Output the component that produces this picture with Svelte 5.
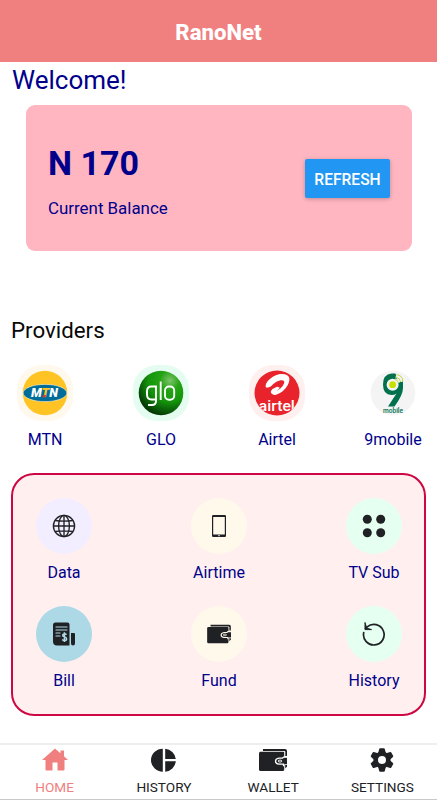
<script>
  const providers = [
    { id: 'mtn', label: 'MTN', bg: '#fff8ec' },
    { id: 'glo', label: 'GLO', bg: '#e5fdf0' },
    { id: 'airtel', label: 'Airtel', bg: '#fff0f0' },
    { id: 'nine', label: '9mobile', bg: '#ffffff' }
  ];
  const services = [
    [
      { id: 'globe', label: 'Data', bg: '#f2eeff' },
      { id: 'phone', label: 'Airtime', bg: '#fff9eb' },
      { id: 'dots', label: 'TV Sub', bg: '#e5fff1' }
    ],
    [
      { id: 'bill', label: 'Bill', bg: '#add8e6' },
      { id: 'wallet', label: 'Fund', bg: '#fff9eb' },
      { id: 'history', label: 'History', bg: '#e5fff1' }
    ]
  ];
  const tabs = [
    { id: 'home', label: 'HOME' },
    { id: 'pie', label: 'HISTORY' },
    { id: 'wallet', label: 'WALLET' },
    { id: 'gear', label: 'SETTINGS' }
  ];
</script>

{#snippet wallet(paper)}
  <path fill="currentColor" d="M4 2h22q2 0 2 2v5h-1.700V5q0-1-1-1H4z" />
  <path fill="currentColor" d="M1.500 4.700h22.700q1 0 1 1V22.500q0 1.500-1.500 1.500h-22Q0 24 0 22.500V6.200q0-1.500 1.500-1.500z" />
  <path fill="currentColor" d="M26.200 18H28v1.500l-1.800 2z" />
  <path fill="currentColor" d="M20 11.200h4l1-1h3.500v7H20q-3.500 0-3.500-3t3.500-3z" />
  <path fill="none" stroke={paper} stroke-width="1.300" d="M28 10.200h-3.500l-1 1H20q-3.500.5-3.500 3t3.500 3h4.500v2" />
  <rect x="19.300" y="13.200" width="3.400" height="1.800" rx=".9" fill="none" stroke={paper} stroke-width="1" />
{/snippet}

<div class="app">
  <header>RanoNet</header>
  <main>
    <h1>Welcome!</h1>
    <section class="card">
      <div>
        <div class="amount">N 170</div>
        <div class="caption">Current Balance</div>
      </div>
      <button>REFRESH</button>
    </section>
    <h2>Providers</h2>
    <section class="providers">
      {#each providers as p}
        <div class="item provider">
          <div class="logo" style:background={p.bg}>
            <svg width="46" height="46" viewBox="0 0 46 46">
              <defs>
                <radialGradient id="green" cx=".7" cy=".22" r=".8">
                  <stop offset="0" stop-color="#7cc36a" />
                  <stop offset=".28" stop-color="#24a313" />
                  <stop offset=".6" stop-color="#14950c" />
                  <stop offset="1" stop-color="#043b05" />
                </radialGradient>
                <clipPath id="round"><circle cx="23" cy="23" r="22.500" /></clipPath>
              </defs>
              {#if p.id === 'mtn'}
                <circle cx="23" cy="23" r="22.300" fill="#ffc423" />
                <ellipse cx="23" cy="23" rx="21.800" ry="8.600" fill="#006c98" stroke="#fff" stroke-width=".5" />
                <text x="9" y="27.300" class="mtn" textLength="27" lengthAdjust="spacingAndGlyphs">M<tspan fill="#ffc423">T</tspan>N</text>
                <path d="M21.200 25h2.900l-.6 2.400h-2.800z" fill="#e23b34" />
              {:else if p.id === 'glo'}
                <circle cx="23" cy="23" r="22.300" fill="url(#green)" />
                <g fill="none" stroke="#fff" stroke-width="1.900">
                  <path d="M18 29.500h-4.500q-4.500 0-4.500-5v-3q0-5 4.500-5H18V31q0 4-4 4h-4M22.700 11.500V30" />
                  <rect x="27" y="16.500" width="9.200" height="13.200" rx="4" />
                </g>
              {:else if p.id === 'airtel'}
                <circle cx="23" cy="23" r="22.500" fill="#e9232b" />
                <path fill="#fff" d="M12 17.500C10 12 20 4 28 4c8 0 9 5 5.500 11.500C31 20 27 23 22 24.700c-3.500 1-5-1.200-2-2.400 5-2 8.500-5 10-8.800 1.500-4-3-4.200-8-1.500-4 2.500-5 6-10 5.500z" />
                <path fill="#fff" d="m18.500 19 4.500-2.300q3 0 2.500 1.600-3 4-7 5.700-3.500-1.500 0-5z" />
                <g clip-path="url(#round)"><text x="4.800" y="41.300" class="airtel" textLength="36" lengthAdjust="spacingAndGlyphs">airtel</text></g>
              {:else}
                <circle cx="23" cy="23" r="22.300" fill="#f4f4f4" />
                <path fill="#00704d" d="M25.500 3.600h-4Q13 4.500 13 14.500 13 25 21.500 25q3 0 5-1.500L18 36.500h6.500Q33 25 33 18v-6.500l-5 1z" />
                <circle cx="22.600" cy="14.700" r="6" fill="#f4f4f4" />
                <circle cx="22.600" cy="14.700" r="3.400" fill="#c6e000" />
                <path d="M25 9.500q3 .8 3.500 3.500M25.700 7q4.500 1 5 5M26.500 4.500q6 1 6.300 6.500" fill="none" stroke="#f4f4f4" stroke-width="2" />
                <path d="M25 9.500q3 .8 3.500 3.500M25.700 7q4.500 1 5 5M26.500 4.500q6 1 6.300 6.500" fill="none" stroke="#bfd83b" />
                <text x="13" y="42.500" class="nine" textLength="20" lengthAdjust="spacingAndGlyphs">mobile</text>
              {/if}
            </svg>
          </div>
          <span>{p.label}</span>
        </div>
      {/each}
    </section>
    <section class="services">
      {#each services as row}
        <div class="row">
          {#each row as s}
            <div class="item">
              <div class="circle" style:background={s.bg}>
                {#if s.id === 'globe'}
                  <svg width="24" height="24" viewBox="0 0 24 24" fill="none" stroke="currentColor" stroke-width="1.350">
                    <circle cx="12" cy="12" r="10.600" /><ellipse cx="12" cy="12" rx="5.400" ry="10.600" />
                    <path d="M12 1.300v21.400M1.300 12h21.400M3.200 6.500q8.800 1.200 17.600 0M3.200 17.500q8.800-1.200 17.600 0" />
                  </svg>
                {:else if s.id === 'phone'}
                  <svg width="24" height="24" viewBox="0 0 24 24">
                    <path fill="currentColor" fill-rule="evenodd" d="M6.200 1h11.600q1.200 0 1.200 1.200v19.600q0 1.200-1.200 1.200H6.200Q5 23 5 21.800V2.200Q5 1 6.200 1zM6.200 2.900v17.600h11.600V2.900z" />
                    <path d="M11.300 21.700h1.500" stroke="#fff" />
                  </svg>
                {:else if s.id === 'dots'}
                  <svg width="24" height="24" viewBox="0 0 24 24" fill="currentColor">
                    <circle cx="5.300" cy="5.300" r="4.500" /><circle cx="18.700" cy="5.300" r="4.500" /><circle cx="5.300" cy="18.700" r="4.500" /><circle cx="18.700" cy="18.700" r="4.500" />
                  </svg>
                {:else if s.id === 'bill'}
                  <svg width="24" height="24" viewBox="0 0 24 24">
                    <path fill="currentColor" d="M3.500.5h12q2 0 2 2v21H5q-4 0-4-4V3Q1 .5 3.500.5zM19 11h3q1 0 1 1v9.500q0 2-2 2t-2-2z" />
                    <path d="M4 5h11M4 8h11M4 11h4M4 14h4" stroke="#add8e6" stroke-width="1.200" stroke-linecap="round" />
                    <path d="M14.500 12.800q-1-1.300-2.600-.9-1.700.6-.9 2.300l3 1.500q1.500 1.800-.5 2.900-2 .5-3.300-1M12.400 10.300V20" fill="none" stroke="#add8e6" stroke-width="1.500" />
                  </svg>
                {:else if s.id === 'wallet'}
                  <svg width="24" height="22" viewBox="0 0 28 26">{@render wallet('#fff9eb')}</svg>
                {:else}
                  <svg width="24" height="24" viewBox="0 0 24 24" fill="none" stroke="currentColor" stroke-width="1.700" stroke-linecap="round">
                    <path d="M1.700 10.700A10.300 10.300 0 1 0 5.200 4.800L3.500 6.500" />
                    <path fill="currentColor" stroke-width="1" stroke-linejoin="round" d="M3 .9v6.700h6.500L5 6.200z" />
                  </svg>
                {/if}
              </div>
              <span>{s.label}</span>
            </div>
          {/each}
        </div>
      {/each}
    </section>
  </main>
  <nav>
    {#each tabs as t}
      <div class="tab" class:active={t.id === 'home'}>
        <svg width="28" height="26" viewBox="0 0 28 26">
          {#if t.id === 'home'}
            <path fill="currentColor" d="M14 1.500 1 13h3.500v9.500q0 1 1 1h6v-8h5v8h6q1 0 1-1V13H27l-4-3.700V3.500h-3.500v2.800z" />
          {:else if t.id === 'pie'}
            <path fill="currentColor" d="M12.800 1.700a11.800 11.500 0 0 0 0 23zM15.200 1.700v10.200h10.600A11.500 11.500 0 0 0 15.200 1.700zM15.200 14.300v10.400a11.500 11.500 0 0 0 10.600-10.400z" />
          {:else if t.id === 'wallet'}
            {@render wallet('#fff')}
          {:else}
            <g fill="currentColor" transform="translate(14 13)">
              <path fill-rule="evenodd" d="M8.500 0A8.500 8.500 0 1 1-8.500 0 8.500 8.500 0 1 1 8.500 0zM4 0A4 4 0 1 0-4 0 4 4 0 1 0 4 0z" />
              {#each [0, 60, 120, 180, 240, 300] as a}
                <path transform="rotate({a})" d="m-3.800-7 1-4q.2-.8 1-.8h3.600q.8 0 1 .8l1 4z" />
              {/each}
            </g>
          {/if}
        </svg>
        <span>{t.label}</span>
      </div>
    {/each}
  </nav>
</div>

<style>
  :global(body) { background: #fff; }
  .app { width: 437px; height: 800px; display: flex; flex-direction: column; overflow: hidden; font-family: Roboto, sans-serif; color: #00008b; }
  header { height: 62px; box-sizing: border-box; padding-top: 2px; background: #f08080; color: #fff; font-size: 22.200px; font-weight: 800; display: flex; align-items: center; justify-content: center; flex: none; }
  main { flex: 1; padding: 0 11px; }
  h1 { margin: 0; padding-left: 1px; height: 42.500px; line-height: 36px; font-size: 26px; font-weight: 400; box-sizing: border-box; }
  .card { height: 146px; margin: .5px 14px 0 15px; padding: 0 22px; box-sizing: border-box; border-radius: 9px; background: #ffb6c1; display: flex; justify-content: space-between; align-items: center; }
  .amount { font-size: 34px; font-weight: 700; line-height: 40px; padding-top: 5px; }
  .caption { font-size: 16.900px; line-height: 20px; margin-top: 15px; }
  button { width: 85px; height: 39px; padding: 3px 0 0; border: 0; border-radius: 2px; background: #2196f3; color: #fff; font: 500 15.600px Roboto, sans-serif; box-shadow: 0 1px 4px rgba(0, 0, 0, .25); }
  h2 { margin: 65px 0 0; height: 28px; line-height: 28px; font-size: 22.300px; font-weight: 400; color: #080808; }
  .providers { display: flex; justify-content: space-between; margin: 21px 5px 0 6px; }
  .item { display: flex; flex-direction: column; align-items: center; width: 56px; font-size: 16px; line-height: 20px; white-space: nowrap; }
  .logo, .circle { width: 56px; height: 56px; border-radius: 50%; display: flex; align-items: center; justify-content: center; flex: none; color: #202124; }
  .logo { border-radius: 24px; }
  .item span { margin-top: 9px; }
  .mtn { font: italic 900 12px Roboto, sans-serif; fill: #fff; }
  .airtel { font: 500 15.500px Roboto, sans-serif; fill: #fff; }
  .nine { font: 500 6.500px Roboto, sans-serif; fill: #00704d; }
  .services { margin-top: 23px; width: 415px; height: 243px; box-sizing: border-box; border: 2px solid #cd0743; border-radius: 23px; background: #fff0ef; padding: 23px 22px 0 23px; }
  .row { display: flex; justify-content: space-between; height: 108px; }
  nav { height: 57px; box-sizing: border-box; border-top: 2px solid #eee; border-bottom: 1px solid #c9c9c9; display: flex; flex: none; color: #202124; }
  .tab { width: 25%; display: flex; flex-direction: column; align-items: center; padding-top: 2px; font-size: 13.600px; }
  .tab span { line-height: 18px; margin-top: 5px; }
  .tab.active { color: #f08080; }
</style>
